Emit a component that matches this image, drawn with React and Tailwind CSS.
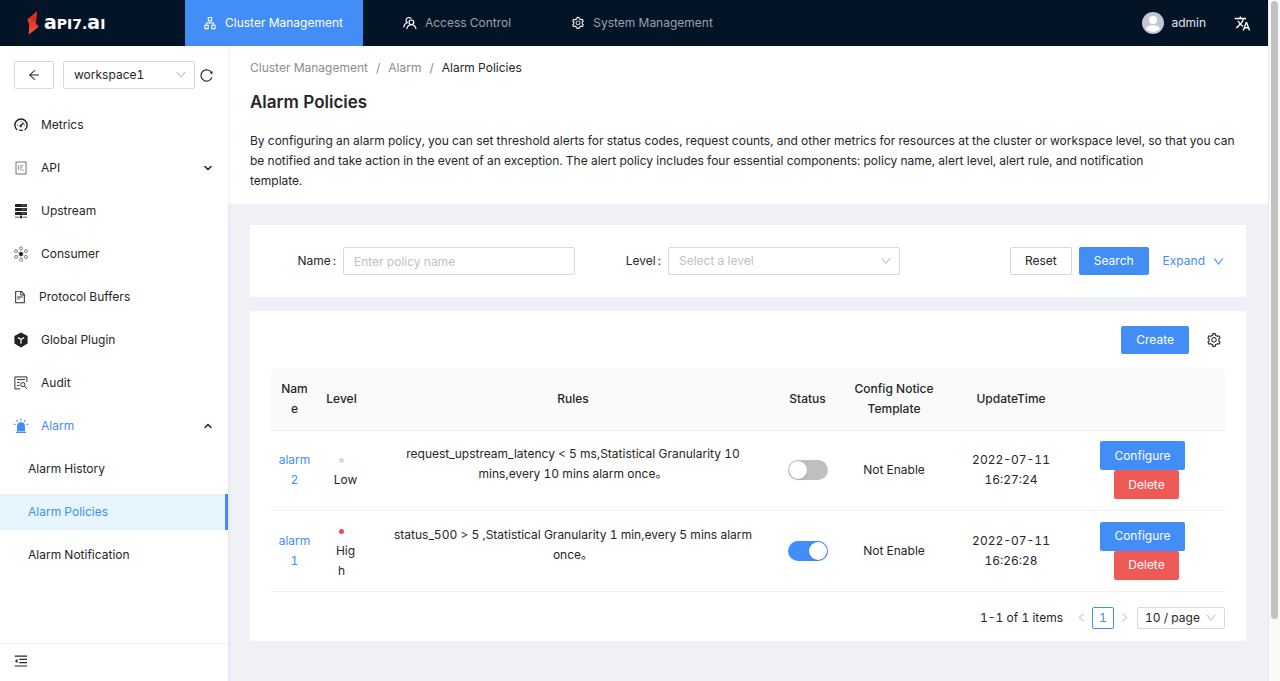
import React, { useState } from 'react';
import {
  AiOutlineApartment,
  AiOutlineArrowLeft,
  AiOutlineDashboard,
  AiOutlineDown,
  AiOutlineFileText,
  AiOutlineLeft,
  AiOutlineMenuFold,
  AiOutlineReload,
  AiOutlineRight,
  AiOutlineSetting,
} from 'react-icons/ai';
import { MdTranslate } from 'react-icons/md';
import { ChevronDown, ChevronUp } from 'lucide-react';

const BoltLogo = () => (
  <svg width="13" height="24" viewBox="0 0 13 24">
    <path d="M10 .3.3 8.4l1.9 5.4L1.7 23.4l10.1-7.8-3-3.4z" fill="#e8392b" />
    <path d="M10 .3 8.8 12.2 2.6 7z" fill="#d4301f" />
    <path d="M1.7 23.4 2.4 16l9.4-.4z" fill="#f04a35" />
  </svg>
);

const AccessIcon = () => (
  <svg width="14" height="14" viewBox="0 0 13 13" fill="none" stroke="currentColor" strokeWidth="1.1" strokeLinecap="round">
    <circle cx="7.8" cy="5.9" r="2.2" />
    <path d="M3.6 11.8c.4-2.2 2-3.7 4.2-3.7s3.8 1.5 4.2 3.7" />
    <path d="M3.9 6.1A2.6 2.6 0 1 1 7.4 2.3" />
    <path d="M.8 10.2c.2-1.8 1.4-3.3 3.1-4.1" />
  </svg>
);

const DashboardIcon = () => (
  <svg width="14" height="14" viewBox="0 0 14 14" fill="none" stroke="#222" strokeWidth="1.4">
    <path d="M3.3 12A6.1 6.1 0 1 1 10.7 12" />
    <path d="M5 12.3h4" strokeWidth="1.2" />
    <path d="M6.8 7.9 9.6 4.8" />
    <circle cx="6.6" cy="8" r=".9" fill="#222" strokeWidth=".6" />
    <path d="M3 7h1.2M7 3v1.1M9.9 7h1.1" strokeWidth=".8" />
  </svg>
);

const ApiIcon = () => (
  <svg width="14" height="14" viewBox="0 0 14 14" fill="none" stroke="#666" strokeWidth="0.9">
    <rect x="2" y="1" width="10" height="12" />
    <path d="M4.5 4.5v4M5.5 5h1.5l2.5-.8M5.5 8h1.2l2.8 1.6M6.5 6.5h1.8" strokeWidth="0.7" />
  </svg>
);

const UpstreamIcon = () => (
  <svg width="14" height="16" viewBox="0 0 14 16" fill="#222">
    <rect x="1" y="1" width="12" height="3" rx=".4" />
    <rect x="1" y="5" width="12" height="3" rx=".4" />
    <rect x="1" y="9" width="12" height="3" rx=".4" />
    <path d="M6.5 12h1v1.5h-1zM1 13.8h4.5v.8H1zM8.5 13.8H13v.8H8.5z" />
    <rect x="6" y="13" width="2" height="2.2" />
    <path d="M7.5 2.2h4M7.5 6.2h4M7.5 10.2h4" stroke="#999" strokeWidth=".7" />
  </svg>
);

const ConsumerIcon = () => (
  <svg width="14" height="16" viewBox="0 0 14 16" fill="none" stroke="#555" strokeWidth="0.7">
    <circle cx="7" cy="2.3" r="1.5" />
    <circle cx="7" cy="13.7" r="1.5" />
    <circle cx="2" cy="5" r="1.5" />
    <circle cx="12" cy="5" r="1.5" />
    <circle cx="2" cy="11" r="1.5" />
    <circle cx="12" cy="11" r="1.5" />
    <circle cx="7" cy="8" r="1.7" fill="#111" stroke="#111" />
    <path d="M3.4 5.9 5.3 7M10.6 5.9 8.7 7M3.4 10.1 5.3 9M10.6 10.1 8.7 9M7 3.8V6M7 12.2V10" strokeWidth=".4" />
  </svg>
);

const PluginIcon = () => (
  <svg width="14" height="16" viewBox="0 0 14 16">
    <path d="M7 .6 13.6 4v7.6L7 15.4.4 11.6V4z" fill="#222" />
    <path d="M3.8 5.6 7 7.3l3.2-1.7M7 7.3v4.4" fill="none" stroke="#fff" strokeWidth="1.2" />
  </svg>
);

const AuditIcon = () => (
  <svg width="14" height="14" viewBox="0 0 14 14" fill="none" stroke="#333" strokeWidth="1">
    <path d="M12.9 6V.9H.9v12h5.2" />
    <path d="M3 3.6h8M3 6.6h2.6M3 9.4h2.6" />
    <circle cx="8.8" cy="8.6" r="2.1" />
    <path d="m10.4 10.2 2.8 2.9" />
  </svg>
);

const AlarmIcon = () => (
  <svg width="16" height="16" viewBox="0 0 16 16" fill="#438df7">
    <path d="M4 13V8.3a4 4 0 0 1 8 0V13z" />
    <rect x="3" y="13.6" width="10" height="1.5" rx=".4" />
    <path d="M8 .8v1.9M3.6 2.2l1 1.5M12.4 2.2l-1 1.5M.7 6l1.8.7M15.3 6l-1.8.7" stroke="#438df7" strokeWidth="1.2" />
  </svg>
);

const topNav = [
  { label: 'Cluster Management', icon: <AiOutlineApartment size={14} />, active: true },
  { label: 'Access Control', icon: <AccessIcon /> },
  { label: 'System Management', icon: <AiOutlineSetting size={14} /> },
];

const sideNav = [
  { label: 'Metrics', icon: <DashboardIcon /> },
  { label: 'API', icon: <ApiIcon />, arrow: 'down' },
  { label: 'Upstream', icon: <UpstreamIcon /> },
  { label: 'Consumer', icon: <ConsumerIcon /> },
  { label: 'Protocol Buffers', icon: <AiOutlineFileText size={14} />, narrow: true },
  { label: 'Global Plugin', icon: <PluginIcon /> },
  { label: 'Audit', icon: <AuditIcon /> },
  { label: 'Alarm', icon: <AlarmIcon />, arrow: 'up', active: true },
];

const alarmNav = ['Alarm History', 'Alarm Policies', 'Alarm Notification'];

const policies = [
  {
    name: 'alarm 2',
    level: 'Low',
    dot: 'bg-[#d9d9d9]',
    rules: 'request_upstream_latency < 5 ms,Statistical Granularity 10 mins,every 10 mins alarm once。',
    enabled: false,
    notice: 'Not Enable',
    updated: '2022-07-11 16:27:24',
  },
  {
    name: 'alarm 1',
    level: 'High',
    dot: 'bg-[#f5484a]',
    rules: 'status_500 > 5 ,Statistical Granularity 1 min,every 5 mins alarm once。',
    enabled: true,
    notice: 'Not Enable',
    updated: '2022-07-11 16:26:28',
  },
];

const Header = () => (
  <header className="flex h-[46px] shrink-0 items-center bg-[#031427] text-white">
    <a href="#" className="flex w-[185px] shrink-0 items-center gap-1 pl-[27px]">
      <BoltLogo />
      <span className="flex items-baseline font-['DejaVu_Sans'] text-[14px] leading-5 font-bold">
        <span className="text-[19px]">a</span>PI7.<span className="text-[19px]">a</span>I
      </span>
    </a>
    <nav className="flex h-full gap-[22px]">
      {topNav.map((item) => (
        <a
          key={item.label}
          href="#"
          className={`flex h-full items-center gap-2 pr-5 pl-[18px] ${item.active ? 'bg-[#438df7] text-white' : 'text-[#9aa1a9]'}`}
        >
          <span className="text-white">{item.icon}</span>
          {item.label}
        </a>
      ))}
    </nav>
    <div className="ml-auto flex items-center pr-[17px]">
      <svg width="22" height="22" viewBox="0 0 22 22">
        <circle cx="11" cy="11" r="11" fill="#c3c7d0" />
        <circle cx="11" cy="8" r="4" fill="#fff" />
        <path d="M4.3 17.3c0-3 3-4 6.7-4s6.7 1 6.7 4c-1.7 1.6-4 2.4-6.7 2.4s-5-.8-6.7-2.4z" fill="#fff" />
      </svg>
      <span className="ml-[7px] text-[#e2e4e7]">admin</span>
      <button type="button" aria-label="Language" className="ml-7">
        <MdTranslate size={17} />
      </button>
    </div>
  </header>
);

const Sidebar = () => (
  <aside className="z-10 flex w-[228px] shrink-0 flex-col bg-white shadow-[1px_0_3px_rgba(0,21,41,0.06)]">
    <div className="flex items-center px-[14px] pt-[15px]">
      <button type="button" aria-label="Back" className="flex h-7 w-[41px] items-center justify-center rounded-xs border border-[#d9d9d9]">
        <AiOutlineArrowLeft size={14} />
      </button>
      <div className="relative ml-[9px]">
        <select aria-label="Workspace" className="h-7 w-[132px] appearance-none rounded-xs border border-[#d9d9d9] bg-white px-[10px]">
          <option>workspace1</option>
        </select>
        <AiOutlineDown size={12} className="pointer-events-none absolute top-2 right-2 text-[#bfbfbf]" />
      </div>
      <button type="button" aria-label="Reload" className="ml-1">
        <AiOutlineReload size={15} />
      </button>
    </div>

    <nav className="mt-[18px] flex flex-col gap-[7px]">
      {sideNav.map((item) => (
        <a key={item.label} href="#" className={`flex h-9 items-center pr-[14px] pl-[13px] ${item.active ? 'text-[#438df7]' : ''}`}>
          <span className={`flex justify-center pb-px ${item.narrow ? 'w-[14px]' : 'w-4'}`}>{item.icon}</span>
          <span className="ml-3">{item.label}</span>
          {item.arrow === 'down' && <ChevronDown size={12} strokeWidth={3} className="ml-auto text-[#222]" />}
          {item.arrow === 'up' && <ChevronUp size={12} strokeWidth={3} className="ml-auto text-[#222]" />}
        </a>
      ))}
      {alarmNav.map((label) => (
        <a
          key={label}
          href="#"
          className={`flex h-9 items-center pl-7 ${label === 'Alarm Policies' ? 'border-r-3 border-[#438df7] bg-[#e6f5ff] text-[#438df7]' : ''}`}
        >
          {label}
        </a>
      ))}
    </nav>

    <div className="mt-auto flex h-[38px] items-center border-t border-[#f0f0f0] pb-1 pl-[13px]">
      <button type="button" aria-label="Collapse menu">
        <AiOutlineMenuFold size={16} />
      </button>
    </div>
  </aside>
);

const SearchForm = () => (
  <form className="grid grid-cols-3 items-center gap-[21px] bg-white px-[21px] py-[22px]">
    <div className="flex items-center">
      <label htmlFor="policy-name" className="w-[72px] shrink-0 pr-[7px] text-right">
        Name<span className="ml-0.5">:</span>
      </label>
      <input
        id="policy-name"
        type="text"
        placeholder="Enter policy name"
        className="h-7 w-full min-w-0 rounded-xs border border-[#d9d9d9] px-[10px] placeholder:text-[#bfbfbf]"
      />
    </div>
    <div className="flex items-center">
      <label htmlFor="policy-level" className="w-[72px] shrink-0 pr-[7px] text-right">
        Level<span className="ml-0.5">:</span>
      </label>
      <div className="relative w-full">
        <select id="policy-level" className="h-7 w-full appearance-none rounded-xs border border-[#d9d9d9] bg-white px-[10px] text-[#bfbfbf]">
          <option>Select a level</option>
        </select>
        <AiOutlineDown size={12} className="pointer-events-none absolute top-2 right-2 text-[#bfbfbf]" />
      </div>
    </div>
    <div className="flex items-center justify-end">
      <button type="button" className="h-7 rounded-xs border border-[#d9d9d9] px-[14px]">Reset</button>
      <button type="button" className="ml-[7px] h-7 rounded-xs bg-[#438df7] px-[15px] text-white">Search</button>
      <button type="button" className="ml-[14px] flex items-center gap-[7px] text-[#438df7]">
        Expand
        <AiOutlineDown size={13} />
      </button>
    </div>
  </form>
);

const PolicyTable = () => {
  const [status, setStatus] = useState(policies.map((p) => p.enabled));

  const toggle = (index) => {
    setStatus(status.map((on, i) => (i === index ? !on : on)));
  };

  return (
    <section className="mt-[14px] bg-white px-[21px] pt-[15px] pb-3">
      <div className="flex items-center justify-end">
        <button type="button" className="h-7 rounded-xs bg-[#438df7] px-[15px] text-white">Create</button>
        <button type="button" aria-label="Table settings" className="mr-[3px] ml-[17px]">
          <AiOutlineSetting size={16} />
        </button>
      </div>

      <table className="mt-[15px] w-full table-fixed border-collapse text-center">
        <colgroup>
          <col className="w-[47px]" />
          <col className="w-[47px]" />
          <col />
          <col className="w-[53px]" />
          <col className="w-[120px]" />
          <col className="w-[114px]" />
          <col className="w-[157px]" />
        </colgroup>
        <thead>
          <tr className="h-[61px] border-b border-[#f0f0f0] bg-[#fafafa]">
            <th className="px-2 font-medium break-words">Name</th>
            <th className="px-[7px] font-medium">Level</th>
            <th className="px-[7px] font-medium">Rules</th>
            <th className="font-medium">Status</th>
            <th className="px-[7px] font-medium">Config Notice Template</th>
            <th className="px-[7px] font-medium">UpdateTime</th>
            <th></th>
          </tr>
        </thead>
        <tbody>
          {policies.map((policy, index) => (
            <tr key={policy.name} className="h-20 border-b border-[#f0f0f0]">
              <td className="px-[7px]">
                <a href="#" className="text-[#438df7]">{policy.name}</a>
              </td>
              <td className="px-[7px] py-[10px] break-words">
                <span className={`inline-block h-[5px] w-[5px] rounded-full align-middle ${policy.dot}`}></span>
                <span className="ml-2">{policy.level}</span>
              </td>
              <td className="px-[7px]">
                <p className="mb-3 px-2">{policy.rules}</p>
              </td>
              <td>
                <input
                  type="checkbox"
                  role="switch"
                  aria-label={`Enable ${policy.name}`}
                  checked={status[index]}
                  onChange={() => toggle(index)}
                  className="mx-auto flex h-5 w-10 appearance-none items-center rounded-full bg-[#bfbfbf] px-px before:h-[18px] before:w-[18px] before:rounded-full before:bg-white before:shadow-sm checked:justify-end checked:bg-[#438df7]"
                />
              </td>
              <td className="px-[7px]">{policy.notice}</td>
              <td className="px-4">{policy.updated}</td>
              <td>
                <div className="flex flex-col items-center">
                  <button type="button" className="mr-2 h-[29px] rounded-xs bg-[#438df7] px-[14px] text-white">Configure</button>
                  <button type="button" className="h-[29px] rounded-xs bg-[#ee5b57] px-[14px] text-white">Delete</button>
                </div>
              </td>
            </tr>
          ))}
        </tbody>
      </table>

      <div className="mt-[15px] flex items-center justify-end">
        <span>1-1 of 1 items</span>
        <button type="button" aria-label="Previous page" className="ml-[13px] text-[#bfbfbf]">
          <AiOutlineLeft size={11} />
        </button>
        <button type="button" className="mx-[5px] h-[22px] w-[22px] rounded-xs border border-[#438df7] text-[#438df7]">1</button>
        <button type="button" aria-label="Next page" className="text-[#bfbfbf]">
          <AiOutlineRight size={11} />
        </button>
        <div className="relative ml-[7px]">
          <select aria-label="Page size" className="h-[22px] w-[88px] appearance-none rounded-xs border border-[#d9d9d9] bg-white px-[7px]">
            <option>10 / page</option>
          </select>
          <AiOutlineDown size={12} className="pointer-events-none absolute top-[5px] right-2 text-[#bfbfbf]" />
        </div>
      </div>
    </section>
  );
};

const App = () => {
  return (
    <div className="flex h-screen bg-[#eff1f6] font-['Inter','Noto_Sans_CJK_SC',sans-serif] text-[12px] leading-5 text-[#262626] tabular-nums">
      <div className="flex min-w-0 flex-1 flex-col">
        <Header />
        <div className="flex min-h-0 flex-1">
          <Sidebar />
          <main className="min-w-0 flex-1">
            <div className="bg-white px-[22px] pt-3 pb-[13px]">
              <nav aria-label="Breadcrumb" className="flex gap-2 text-[#8c8c8c]">
                <a href="#">Cluster Management</a>
                <span>/</span>
                <a href="#">Alarm</a>
                <span>/</span>
                <span className="text-[#262626]">Alarm Policies</span>
              </nav>
              <h1 className="mt-[10px] text-[17px] leading-7 font-semibold">Alarm Policies</h1>
              <p className="mt-[15px]">
                By configuring an alarm policy, you can set threshold alerts for status codes, request counts, and other metrics for resources at the cluster or workspace level, so that you can be notified and take action in the event of an exception. The alert policy includes four essential components: policy name, alert level, alert rule, and notification
                <br />
                template.
              </p>
            </div>
            <div className="px-[22px] py-[21px]">
              <SearchForm />
              <PolicyTable />
            </div>
          </main>
        </div>
      </div>

      {/* scroll track */}
      <div className="flex w-3 shrink-0 justify-center border-l border-[#e8e8e8] bg-[#fafafa] pt-px">
        <div className="h-[618px] w-[7px] rounded-full bg-[#c1c1c1]"></div>
      </div>
    </div>
  );
};

export default App;
